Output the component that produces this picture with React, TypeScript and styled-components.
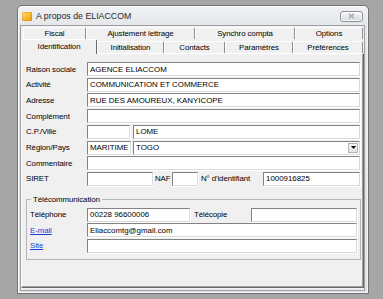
import React from "react";
import styled, { createGlobalStyle, css } from "styled-components";

const Global = createGlobalStyle`
  html, body { margin: 0; padding: 0; background: #a6a6a6; }
  body {
    font-family: "Liberation Sans", Arial, sans-serif;
    width: 383px;
    height: 299px;
    overflow: hidden;
  }
  * { box-sizing: border-box; }
`;

const Window = styled.div`
  margin: 5px 0 0 17px;
  width: 352px;
  height: 289px;
  border: 1px solid #707276;
  border-radius: 5px 5px 0 0;
  background: linear-gradient(#f1f2f4, #e4e6e9 20px, #e1e3e6);
  box-shadow: inset 1px 1px 0 #fcfcfc, inset -1px -1px 0 #f2f3f5;
  display: flex;
  flex-direction: column;
  padding: 0 3px 2px 2px;
`;

const TitleBar = styled.div`
  height: 19px;
  display: flex;
  align-items: center;
  padding-left: 2px;
`;

const AppIcon = styled.div`
  width: 10px;
  height: 9px;
  border-radius: 1px;
  background: linear-gradient(135deg, #ffe27a, #f7b731 55%, #ee9d1c);
  box-shadow: inset 0 0 0 1px rgba(200, 120, 10, 0.35);
  margin-top: 1px;
`;

const Title = styled.div`
  margin-left: 4px;
  font-size: 8.8px;
  color: #2a2a2a;
  flex: 1;
  white-space: nowrap;
`;

const CloseButton = styled.div`
  width: 23px;
  height: 11px;
  margin: 1px 2px 0 0;
  border: 1px solid #8c8f94;
  border-radius: 3px;
  background: linear-gradient(#fbfbfb, #e6e7e9 50%, #d9dadd);
  box-shadow: inset 0 0 0 1px rgba(255, 255, 255, 0.8);
  display: flex;
  align-items: center;
  justify-content: center;
`;

const Client = styled.div`
  flex: 1;
  background: #f0f0f0;
  border: 1px solid #9da0a4;
  padding: 1px 0 2px 0;
  display: flex;
  flex-direction: column;
`;

const TabControl = styled.div`
  flex: 1;
  display: flex;
  flex-direction: column;
`;

const TabRow = styled.div<{ $back?: boolean }>`
  display: flex;
  height: ${(p) => (p.$back ? 12 : 14)}px;
  padding-left: ${(p) => (p.$back ? 2 : 0)}px;
  align-items: flex-end;
`;

const Tab = styled.div<{ $w: number; $selected?: boolean }>`
  width: ${(p) => p.$w}px;
  height: ${(p) => (p.$selected ? 15 : 12)}px;
  border-top: 1px solid #ffffff;
  border-left: 1px solid #ffffff;
  border-right: 1px solid #8e8e8e;
  border-radius: 2px 2px 0 0;
  background: #f0f0f0;
  font-size: 7.9px;
  letter-spacing: -0.1px;
  color: #000;
  display: flex;
  align-items: center;
  justify-content: center;
  white-space: nowrap;
  ${(p) =>
    p.$selected &&
    css`
      position: relative;
      z-index: 1;
      margin-bottom: -1px;
      border-right-color: #696969;
      padding-bottom: 1px;
    `}
`;

const Panel = styled.div`
  flex: 1;
  border-top: 1px solid #ffffff;
  border-left: 1px solid #ffffff;
  border-right: 1px solid #696969;
  border-bottom: 1px solid #696969;
  box-shadow: inset -1px -1px 0 #a0a0a0;
  padding: 8px 2px 0 4px;
  display: flex;
  flex-direction: column;
`;

const Form = styled.div`
  display: flex;
  flex-direction: column;
  gap: 1.71px;
  margin-right: 1px;
`;

const Row = styled.div`
  display: flex;
  align-items: center;
  height: 14px;
`;

const Label = styled.div<{ $w: number; $ml?: number }>`
  flex: none;
  width: ${(p) => p.$w}px;
  margin-left: ${(p) => p.$ml ?? 0}px;
  font-size: 7.9px;
  letter-spacing: -0.1px;
  color: #000;
  white-space: nowrap;
`;

const LinkLabel = styled(Label)`
  color: #1c3fd6;
  text-decoration: underline;
`;

const Field = styled.div<{ $w?: number; $ml?: number }>`
  ${(p) => (p.$w ? `width: ${p.$w}px; flex: none;` : `flex: 1;`)}
  margin-left: ${(p) => p.$ml ?? 0}px;
  height: 14px;
  background: #ffffff;
  border: 1px solid;
  border-color: #828282 #dadada #dadada #828282;
  box-shadow: 1px 1px 0 #ffffff;
  font-size: 7.9px;
  color: #000;
  padding: 0 2px;
  display: flex;
  align-items: center;
  white-space: nowrap;
  overflow: hidden;
`;

const FieldText = styled.span`
  flex: 1;
  overflow: hidden;
`;

const DropButton = styled.div`
  flex: none;
  width: 10px;
  height: 10px;
  margin-right: -1px;
  background: linear-gradient(#f6f6f6, #e2e2e2);
  border: 1px solid #b4b4b4;
  display: flex;
  align-items: center;
  justify-content: center;
`;

const GroupBox = styled.fieldset`
  margin: 9.5px 0 0 0;
  width: 335px;
  border: 1px solid #b5b5b5;
  padding: 3.5px 3px 6px 3px;
  display: flex;
  flex-direction: column;
  gap: 1.5px;
  min-width: 0;
`;

const Legend = styled.legend`
  margin-left: 1px;
  padding: 0 2px;
  font-size: 7.9px;
  line-height: 9px;
  letter-spacing: -0.1px;
  color: #000;
`;

const rows1 = [
  { label: "Fiscal", w: 63 },
  { label: "Ajustement lettrage", w: 109 },
  { label: "Synchro compta", w: 100 },
  { label: "Options", w: 68 },
];

const rows2 = [
  { label: "Identification", w: 76, selected: true },
  { label: "Initialisation", w: 67 },
  { label: "Contacts", w: 61 },
  { label: "Paramètres", w: 68 },
  { label: "Préférences", w: 70 },
];

export default function App() {
  return (
    <>
      <Global />
      <Window>
        <TitleBar>
          <AppIcon />
          <Title>A propos de ELIACCOM</Title>
          <CloseButton>
            <svg width="7" height="6" viewBox="0 0 7 6">
              <path
                d="M1 0.8L6 5.2M6 0.8L1 5.2"
                stroke="#a4a7ab"
                strokeWidth="1.4"
                fill="none"
              />
            </svg>
          </CloseButton>
        </TitleBar>
        <Client>
          <TabControl>
            <TabRow $back>
              {rows1.map((t) => (
                <Tab key={t.label} $w={t.w}>
                  {t.label}
                </Tab>
              ))}
            </TabRow>
            <TabRow>
              {rows2.map((t) => (
                <Tab key={t.label} $w={t.w} $selected={t.selected}>
                  {t.label}
                </Tab>
              ))}
            </TabRow>
            <Panel>
              <Form>
                <Row>
                  <Label $w={61}>Raison sociale</Label>
                  <Field>AGENCE ELIACCOM</Field>
                </Row>
                <Row>
                  <Label $w={61}>Activité</Label>
                  <Field>COMMUNICATION ET COMMERCE</Field>
                </Row>
                <Row>
                  <Label $w={61}>Adresse</Label>
                  <Field>RUE DES AMOUREUX, KANYICOPE</Field>
                </Row>
                <Row>
                  <Label $w={61}>Complément</Label>
                  <Field />
                </Row>
                <Row>
                  <Label $w={61}>C.P./Ville</Label>
                  <Field $w={43} />
                  <Field $ml={3}>LOME</Field>
                </Row>
                <Row>
                  <Label $w={61}>Région/Pays</Label>
                  <Field $w={44}>MARITIME</Field>
                  <Field $ml={2}>
                    <FieldText>TOGO</FieldText>
                    <DropButton>
                      <svg width="5" height="3" viewBox="0 0 5 3">
                        <path d="M0 0h5L2.5 3z" fill="#000" />
                      </svg>
                    </DropButton>
                  </Field>
                </Row>
                <Row>
                  <Label $w={61}>Commentaire</Label>
                  <Field />
                </Row>
                <Row>
                  <Label $w={61}>SIRET</Label>
                  <Field $w={66} />
                  <Label $w={17} $ml={2}>NAF</Label>
                  <Field $w={26} />
                  <Label $w={62} $ml={3}>N° d'identifiant</Label>
                  <Field>1000916825</Field>
                </Row>
              </Form>
              <GroupBox>
                <Legend>Télécommunication</Legend>
                <Row>
                  <Label $w={57}>Téléphone</Label>
                  <Field $w={103}>00228 96600006</Field>
                  <Label $w={57} $ml={4}>Télécopie</Label>
                  <Field />
                </Row>
                <Row>
                  <LinkLabel $w={57}>E-mail</LinkLabel>
                  <Field>Eliaccomtg@gmail.com</Field>
                </Row>
                <Row>
                  <LinkLabel $w={57}>Site</LinkLabel>
                  <Field />
                </Row>
              </GroupBox>
            </Panel>
          </TabControl>
        </Client>
      </Window>
    </>
  );
}
